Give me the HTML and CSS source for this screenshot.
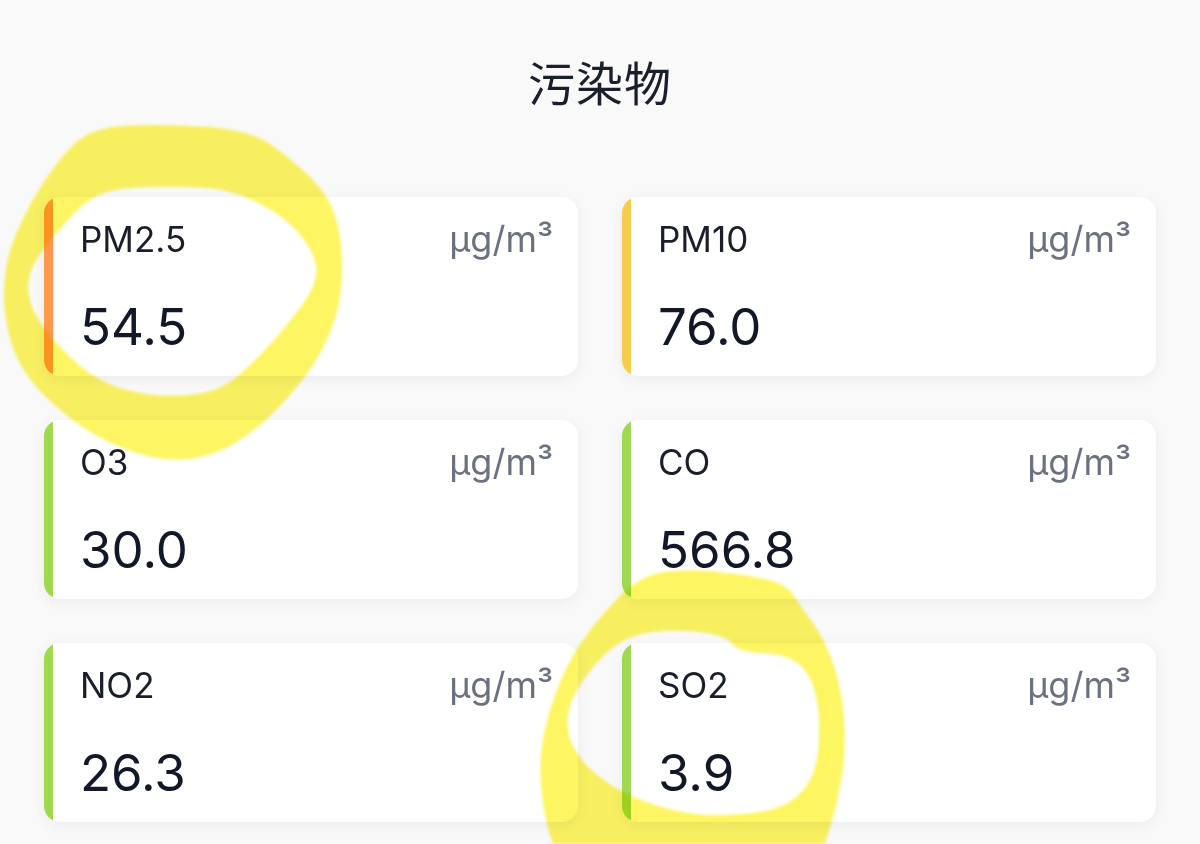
FILE: index.html
```html
<!DOCTYPE html>
<html lang="zh-CN">
<head>
<meta charset="utf-8">
<title>污染物</title>
<link rel="stylesheet" href="styles.css">
</head>
<body>
<main class="page">
  <h1 class="title">污染物</h1>
  <section class="grid">
    <article class="card level-orange">
      <div class="card-head"><span class="name">PM2.5</span><span class="unit">µg/m³</span></div>
      <div class="value">54.5</div>
    </article>
    <article class="card level-yellow">
      <div class="card-head"><span class="name">PM10</span><span class="unit">µg/m³</span></div>
      <div class="value">76.0</div>
    </article>
    <article class="card level-green">
      <div class="card-head"><span class="name">O3</span><span class="unit">µg/m³</span></div>
      <div class="value">30.0</div>
    </article>
    <article class="card level-green">
      <div class="card-head"><span class="name">CO</span><span class="unit">µg/m³</span></div>
      <div class="value">566.8</div>
    </article>
    <article class="card level-green">
      <div class="card-head"><span class="name">NO2</span><span class="unit">µg/m³</span></div>
      <div class="value">26.3</div>
    </article>
    <article class="card level-green">
      <div class="card-head"><span class="name">SO2</span><span class="unit">µg/m³</span></div>
      <div class="value">3.9</div>
    </article>
  </section>
</main>
<svg class="marker" viewBox="0 0 1200 844" width="1200" height="844" aria-hidden="true">
  <g class="marker-ink" fill-rule="evenodd">
    <!-- loop around the PM2.5 card -->
    <path d="M 130 125.5 Q 167 124 208.5 127 Q 250 130 271.5 145 Q 293 160 311.5 178.5 Q 330 197 336 218.5 Q 342 240 342 268.5 Q 342 297 334.5 320 Q 327 343 313.5 364 Q 300 385 280 406 Q 260 427 238.5 441 Q 217 455 192 458.5 Q 167 462 138.5 453.5 Q 110 445 85 428.5 Q 60 412 40 391 Q 20 370 11.5 343.5 Q 3 317 4 288.5 Q 5 260 16 234 Q 27 208 43.5 182.5 Q 60 157 76.5 142 Q 93 127 130 125.5 Z
             M 131 188 Q 165 186 199 187.5 Q 233 189 261.5 204.5 Q 290 220 303.5 239 Q 317 258 316.5 271.5 Q 316 285 304.5 301.5 Q 293 318 274 340 Q 255 362 236 377.5 Q 217 393 188.5 395 Q 160 397 137.5 392.5 Q 115 388 97.5 378 Q 80 368 61 348 Q 42 328 34.5 312.5 Q 27 297 28.5 282 Q 30 267 44 248.5 Q 58 230 77.5 210 Q 97 190 131 188 Z"/>
    <!-- loop around the SO2 card -->
    <path d="M 665 572 Q 690 569 715 571.5 Q 740 574 762.5 578.5 Q 785 583 792.5 594 Q 800 605 812.5 622.5 Q 825 640 833.5 665 Q 842 690 844 720 Q 846 750 842 775 Q 838 800 831.5 822.5 Q 825 845 820 857.5 Q 815 870 752.5 875 Q 690 880 627.5 875 Q 565 870 556.5 852.5 Q 548 835 543 802.5 Q 538 770 542.5 742.5 Q 547 715 557.5 688.5 Q 568 662 581.5 642 Q 595 622 617.5 598.5 Q 640 575 665 572 Z
             M 665 631 Q 690 630 709 633.5 Q 728 637 733 644.5 Q 738 652 766.5 653.5 Q 795 655 806.5 672.5 Q 818 690 819 720 Q 820 750 815 767.5 Q 810 785 797.5 796 Q 785 807 767.5 810.5 Q 750 814 725 815 Q 700 816 677.5 811 Q 655 806 636 798 Q 617 790 601 778 Q 585 766 576.5 752.5 Q 568 740 567.5 724 Q 567 708 576 692 Q 585 676 597.5 662 Q 610 648 625 640 Q 640 632 665 631 Z"/>
  </g>
</svg>
</body>
</html>
```

FILE: styles.css
```css
html, body {
  margin: 0;
  padding: 0;
}

body {
  background: #f9f9fa;
  font-family: "Inter", "Liberation Sans", "Noto Sans CJK SC", sans-serif;
  color: #161b27;
  width: 1200px;
  height: 844px;
  overflow: hidden;
  position: relative;
}

.page {
  padding-top: 53px;
}

.title {
  margin: 0;
  text-align: center;
  font-family: "Noto Sans CJK SC", "Noto Sans", sans-serif;
  font-weight: 400;
  font-size: 47px;
  line-height: 56px;
  color: #1a1f2c;
  letter-spacing: 1px;
}

.grid {
  margin-top: 88px;
  padding: 0 44px;
  display: grid;
  grid-template-columns: 1fr 1fr;
  gap: 44px;
}

.card {
  position: relative;
  overflow: hidden;
  height: 179px;
  box-sizing: border-box;
  padding: 22px 25px 0 36px;
  background: #ffffff;
  border-radius: 16px;
  box-shadow: 0 3px 14px rgba(20, 24, 40, 0.06);
}

/* colour strip on the left edge showing the pollutant level */
.card::before {
  content: "";
  position: absolute;
  left: 0;
  top: 0;
  bottom: 0;
  width: 9px;
}

.level-orange::before { background: #fb9a4d; }
.level-yellow::before { background: #f8cd4c; }
.level-green::before { background: #9fd94f; }

.card-head {
  display: flex;
  justify-content: space-between;
  align-items: baseline;
}

.name {
  font-size: 35px;
  line-height: 41px;
  color: #1a1e2a;
}

.unit {
  font-size: 36px;
  line-height: 41px;
  color: #6b7180;
}

.value {
  margin-top: 37px;
  font-size: 51px;
  line-height: 60px;
  color: #121827;
}

/* hand-drawn highlighter strokes on top of the page */
.marker {
  position: absolute;
  left: 0;
  top: 0;
  pointer-events: none;
  mix-blend-mode: multiply;
  filter: blur(1.5px);
}

.marker-ink {
  fill: #fdf562;
}
```
